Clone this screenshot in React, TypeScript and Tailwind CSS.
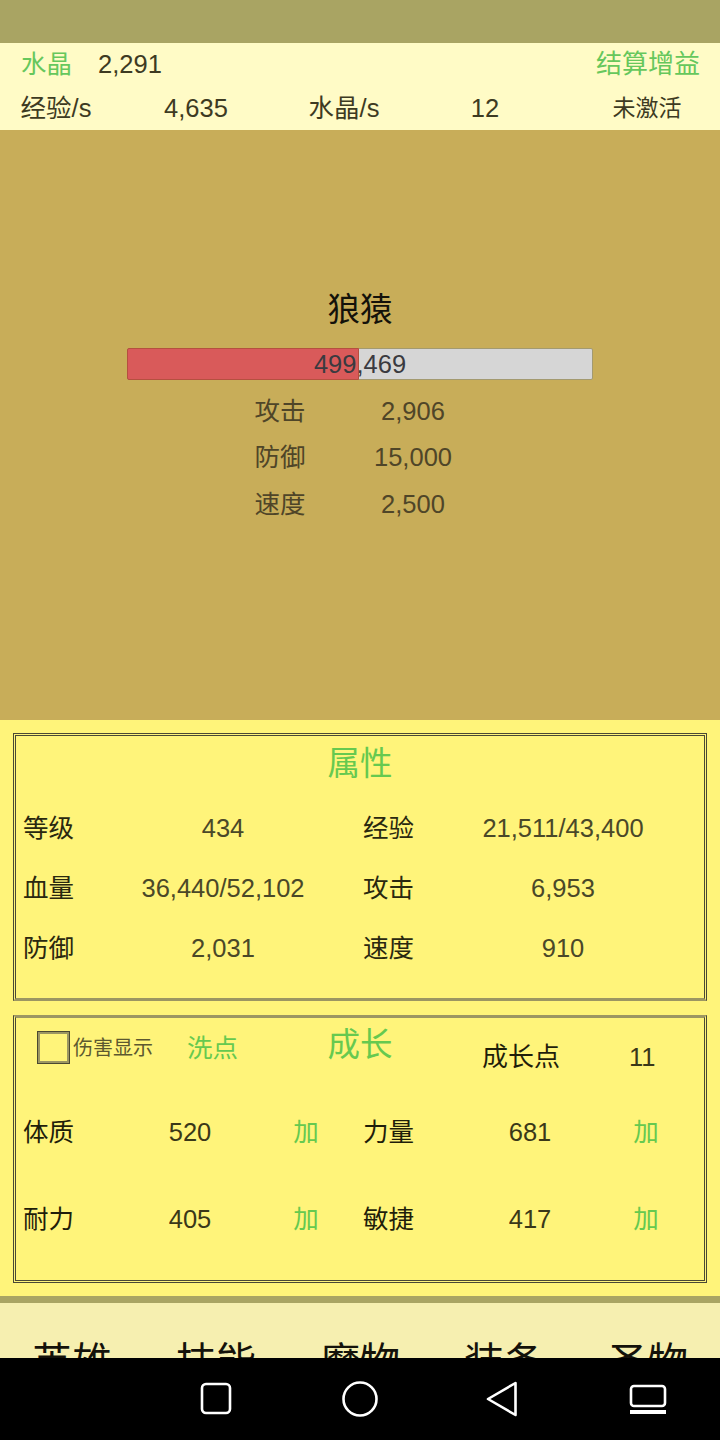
import React from 'react';

const FONT = "[font-family:'Liberation_Sans','Noto_Sans_CJK_SC',sans-serif]";

const StatRow: React.FC<{ label: string; value: string }> = ({ label, value }) => (
    <div className="grid grid-cols-[100px_166px] justify-center h-[46.5px] items-center text-[25.5px] text-[#4f4528] pl-[6px]">
        <span className="text-center">{label}</span>
        <span className="text-center">{value}</span>
    </div>
);

const Pair: React.FC<{ label: string; value: string }> = ({ label, value }) => (
    <div className="grid grid-cols-[84px_246px_10px] items-center">
        <span className="pl-[7px] text-[#2a280f]">{label}</span>
        <span className="text-center text-[#4a4828]">{value}</span>
    </div>
);

const Growth: React.FC<{ label: string; value: string }> = ({ label, value }) => (
    <div className="grid grid-cols-[84px_180px_52px_24px] items-center">
        <span className="pl-[7px] text-[#1f1e0a]">{label}</span>
        <span className="text-center text-[#3a3818]">{value}</span>
        <span className="text-center text-[#66c94f]">加</span>
    </div>
);

const Box: React.FC<{ className: string; children: React.ReactNode }> = ({ className, children }) => (
    <div className={`mx-[13px] border-[3px] border-double border-l-[#4a4834] border-r-[#4a4834] ${className}`}>
        {children}
    </div>
);

export default function App() {
    return (
        <div className={`w-[720px] h-[1440px] overflow-hidden flex flex-col ${FONT}`}>
            <div className="h-[43px] bg-[#a9a463]" />

            <header className="h-[87px] bg-[#fffbc6] text-[25.5px] text-[#3d3a22]">
                <div className="h-[43px] flex items-center pl-[21px] pr-[20px]">
                    <span className="text-[#66c75c] w-[77px]">水晶</span>
                    <span>2,291</span>
                    <span className="ml-auto text-[#66c75c] text-[26px]">结算增益</span>
                </div>
                <div className="h-[44px] pt-[1px] grid grid-cols-[112px_168px_128px_154px_1fr] items-center text-center">
                    <span>经验/s</span>
                    <span>4,635</span>
                    <span>水晶/s</span>
                    <span>12</span>
                    <span className="text-[23px] pl-3">未激活</span>
                </div>
            </header>

            <section className="h-[590px] bg-[#c8ad59] flex flex-col items-center pt-[157px]">
                <h2 className="h-[46px] leading-[46px] text-[32.5px] text-[#14120a]">狼猿</h2>
                <div className="relative mt-[15px] w-[466px] h-[32px] bg-[#d6d6d6] border border-[#a39a70] rounded-[2px] mb-[7.5px]">
                    <div className="-m-px h-[32px] w-[232px] bg-[#d95a5a] border border-[#b5503f] rounded-l-[2px]" />
                    <span className="absolute inset-0 text-center leading-[31px] text-[25.5px] text-[#3a3a40]">499,469</span>
                </div>
                <StatRow label="攻击" value="2,906" />
                <StatRow label="防御" value="15,000" />
                <StatRow label="速度" value="2,500" />
            </section>

            <section className="h-[576px] bg-[#fff47a] pt-[13px] text-[25.5px]">
                <Box className="h-[268px] border-t-[#4a4834] border-b-[#9c9662] [border-bottom-style:solid]">
                    <h3 className="h-[56px] pt-[4px] text-center text-[32.5px] leading-[48px] text-[#66c94f]">属性</h3>
                    <div className="mt-[6px] grid grid-cols-[340px_340px] auto-rows-[60px]">
                        <Pair label="等级" value="434" />
                        <Pair label="经验" value="21,511/43,400" />
                        <Pair label="血量" value="36,440/52,102" />
                        <Pair label="攻击" value="6,953" />
                        <Pair label="防御" value="2,031" />
                        <Pair label="速度" value="910" />
                    </div>
                </Box>

                <Box className="h-[268px] mt-[14px] border-t-[#9c9662] [border-top-style:solid] border-b-[#4a4834]">
                    <div className="relative h-[72px]">
                        <h3 className="absolute top-[3px] inset-x-0 text-center text-[32.5px] leading-[48px] text-[#66c94f]">成长</h3>
                        <div className="relative flex items-start pl-[22px] pt-[14px]">
                            <div className="w-[31px] h-[31px] border-2 border-[#9c9662] outline outline-1 outline-[#4a4830]" />
                            <span className="ml-[4px] w-[80px] text-[20px] leading-[32px] text-[#5c5830]">伤害显示</span>
                            <span className="ml-[34px] leading-[32px] text-[#66c94f]">洗点</span>
                            <span className="ml-[244px] mt-[9px] text-[26px] leading-[32px] text-[#1f1e0a]">成长点</span>
                            <span className="ml-[69px] mt-[9px] leading-[32px] text-[#3a3818]">11</span>
                        </div>
                    </div>
                    <div className="grid grid-cols-[340px_340px] auto-rows-[87px] -mt-[1px]">
                        <Growth label="体质" value="520" />
                        <Growth label="力量" value="681" />
                        <Growth label="耐力" value="405" />
                        <Growth label="敏捷" value="417" />
                    </div>
                </Box>
            </section>

            <div className="h-[7px] bg-[#a9a463]" />

            <nav className="h-[55px] overflow-hidden bg-[#f6efb0] grid grid-cols-5 text-center text-[40px] leading-[56px] pt-[31px] text-[#14120a]">
                <span>英雄</span>
                <span>技能</span>
                <span>魔物</span>
                <span>装备</span>
                <span>圣物</span>
            </nav>

            <div className="h-[82px] bg-black flex items-start pt-[23px] pl-[200px]">
                <svg width="32" height="34" viewBox="0 0 32 34" fill="none" stroke="white" strokeWidth="2.6" className="mt-[1px]">
                    <rect x="2" y="2" width="28" height="29" rx="4" />
                </svg>
                <svg width="36" height="36" viewBox="0 0 36 36" fill="none" stroke="white" strokeWidth="2.6" className="ml-[110px]">
                    <circle cx="18" cy="18" r="16.5" />
                </svg>
                <svg width="32" height="36" viewBox="0 0 32 36" fill="none" stroke="white" strokeWidth="2.6" strokeLinejoin="round" className="ml-[108px]">
                    <path d="M29.5 2 L2 18 L29.5 34 Z" />
                </svg>
                <svg width="38" height="32" viewBox="0 0 38 32" fill="none" stroke="white" strokeWidth="2.6" className="ml-[111px] mt-[3px]">
                    <rect x="2" y="2" width="34" height="20" rx="3" />
                    <rect x="1" y="26" width="36" height="4" fill="white" stroke="none" />
                </svg>
            </div>
        </div>
    );
}
